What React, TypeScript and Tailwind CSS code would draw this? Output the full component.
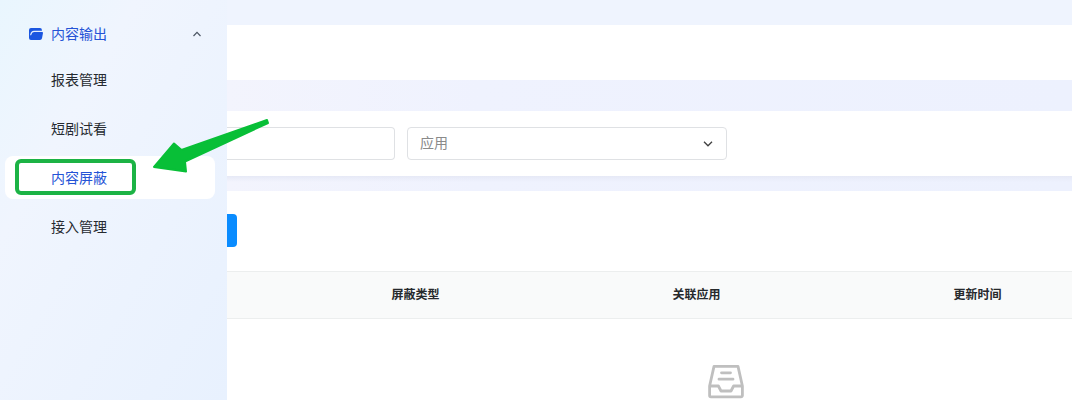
import { useState } from "react";

interface MenuItem {
  id: string;
  label: string;
}

const menuItems: MenuItem[] = [
  { id: "report", label: "报表管理" },
  { id: "preview", label: "短剧试看" },
  { id: "block", label: "内容屏蔽" },
  { id: "access", label: "接入管理" },
];

function FolderIcon() {
  return (
    <svg width="14" height="12" viewBox="0 0 14 12" aria-hidden="true">
      <path
        d="M2 0H11A1.9 1.9 0 0 1 12.9 1.9V4H13.2A.9.9 0 0 1 14 5L13 10.2A2.2 2.2 0 0 1 10.9 12H2A2 2 0 0 1 0 10V2A2 2 0 0 1 2 0Z"
        fill="#1b56e0"
      />
      <path d="M1.7 6.8C2.2 4.4 3 3.4 5 3.4H12.9" fill="none" stroke="#e6effd" strokeWidth="1.1" strokeLinecap="round" />
    </svg>
  );
}

function EmptyIcon() {
  return (
    <svg
      className="mx-auto block"
      width="36"
      height="35"
      viewBox="0 0 36 35"
      fill="none"
      stroke="#bfbfbf"
      strokeWidth="2.8"
      strokeLinejoin="round"
      aria-hidden="true"
    >
      <path d="M6 2.4H30L34.4 22V31.5A1.4 1.4 0 0 1 33 32.9H3A1.4 1.4 0 0 1 1.6 31.5V22Z" />
      <path d="M1.6 22H10.4L13 27H23L25.6 22H34.4" />
      <path d="M13.5 8.8H22.5M11 15.2H25" strokeLinecap="round" strokeWidth="2.8" />
    </svg>
  );
}

export default function ContentBlockPage() {
  const [active, setActive] = useState("block");
  const [open, setOpen] = useState(true);

  return (
    <div className="relative flex h-screen overflow-hidden bg-[#eff2fd] font-['Inter','Noto_Sans_CJK_SC',sans-serif] text-sm">
      {/* Sidebar */}
      <aside className="w-[227px] shrink-0 bg-linear-to-br from-[#e9f6fe] via-[#f0f5fe] via-30% to-[#e8f1fe] pt-3 pr-3 pl-[5px]">
        <button
          type="button"
          aria-expanded={open}
          onClick={() => setOpen(!open)}
          className="flex h-[43px] w-full items-center pr-3 pl-6 text-[#2453d6]"
        >
          <FolderIcon />
          <span className="ml-2">内容输出</span>
          <svg className="ml-auto" width="12" height="12" viewBox="0 0 12 12" fill="none" stroke="#4b5563" aria-hidden="true">
            <path d="M2.5 8L6 4.3L9.5 8" strokeWidth="1.2" />
          </svg>
        </button>
        {open && (
          <nav className="mt-[3px] flex flex-col gap-[6px]">
            {menuItems.map((item) => (
              <a
                key={item.id}
                href={`#${item.id}`}
                onClick={() => setActive(item.id)}
                className={`flex h-[43px] items-center rounded-lg pl-[46px] ${
                  active === item.id ? "bg-white text-[#2453d6]" : "text-[#262a30]"
                }`}
              >
                {item.label}
              </a>
            ))}
          </nav>
        )}
      </aside>

      {/* Content */}
      <main className="flex min-w-0 flex-1 flex-col overflow-hidden bg-linear-to-r from-[#f3f4fd] via-[#eff2fe] via-30% to-[#edf1fe]">
        <div className="h-[25px] shrink-0 bg-[#eff4fe]" />
        <div className="h-[55px] shrink-0 bg-white" />

        {/* Filters */}
        <form className="mt-[31px] flex gap-3 bg-white py-4">
          <input
            type="text"
            aria-label="名称"
            className="h-[33px] w-[168px] rounded-r border border-l-0 border-[#dfe1e4] px-3 outline-none"
          />
          <div className="relative w-[320px]">
            <select
              aria-label="应用"
              defaultValue=""
              className="h-[33px] w-full appearance-none rounded border border-[#dfe1e4] bg-white px-3 pb-px text-[#8a8a8a] outline-none"
            >
              <option value="">应用</option>
            </select>
            <svg
              className="pointer-events-none absolute top-[11px] right-[13px]"
              width="12"
              height="12"
              viewBox="0 0 12 12"
              fill="none"
              stroke="#404040"
              aria-hidden="true"
            >
              <path d="M2 3.8L6 7.8L10 3.8" strokeWidth="1.3" />
            </svg>
          </div>
        </form>
        <div className="h-[15px] shrink-0 bg-linear-to-b from-[#e6e9f6] to-transparent to-40%" />

        {/* Table */}
        <section className="flex-1 bg-white pt-[23px]">
          <button type="button" aria-label="新增" className="block h-[33px] w-[10px] rounded-r bg-[#0a8cff]" />
          <table className="mt-6 w-[998px] table-fixed border-separate border-spacing-0">
            <thead>
              <tr className="h-[48px] text-xs text-[#26292c]">
                <th className="w-[48px] border-y border-[#eceeee] bg-[#f9fafa]" />
                <th className="w-[281px] border-y border-[#eceeee] bg-[#f9fafa] font-bold">屏蔽类型</th>
                <th className="w-[281px] border-y border-[#eceeee] bg-[#f9fafa] font-bold">关联应用</th>
                <th className="w-[281px] border-y border-[#eceeee] bg-[#f9fafa] font-bold">更新时间</th>
                <th className="border-y border-[#eceeee] bg-[#f9fafa]" />
              </tr>
            </thead>
            <tbody>
              <tr>
                <td colSpan={5} className="pt-[45px]">
                  <EmptyIcon />
                </td>
              </tr>
            </tbody>
          </table>
        </section>
      </main>

      {/* Guide marks */}
      <div className="pointer-events-none absolute top-[159px] left-[15px] h-9 w-[121px] rounded-md border-4 border-[#1cb345]" />
      <svg
        className="pointer-events-none absolute top-[116px] left-[150px]"
        width="122"
        height="60"
        viewBox="0 0 122 60"
        aria-hidden="true"
      >
        <path
          d="M4 51L24 27.5L31.5 34L117 4L118 7L35 45.5L36 55.5Z"
          fill="#08bf37"
          stroke="#08bf37"
          strokeWidth="2"
          strokeLinejoin="round"
        />
      </svg>
    </div>
  );
}
